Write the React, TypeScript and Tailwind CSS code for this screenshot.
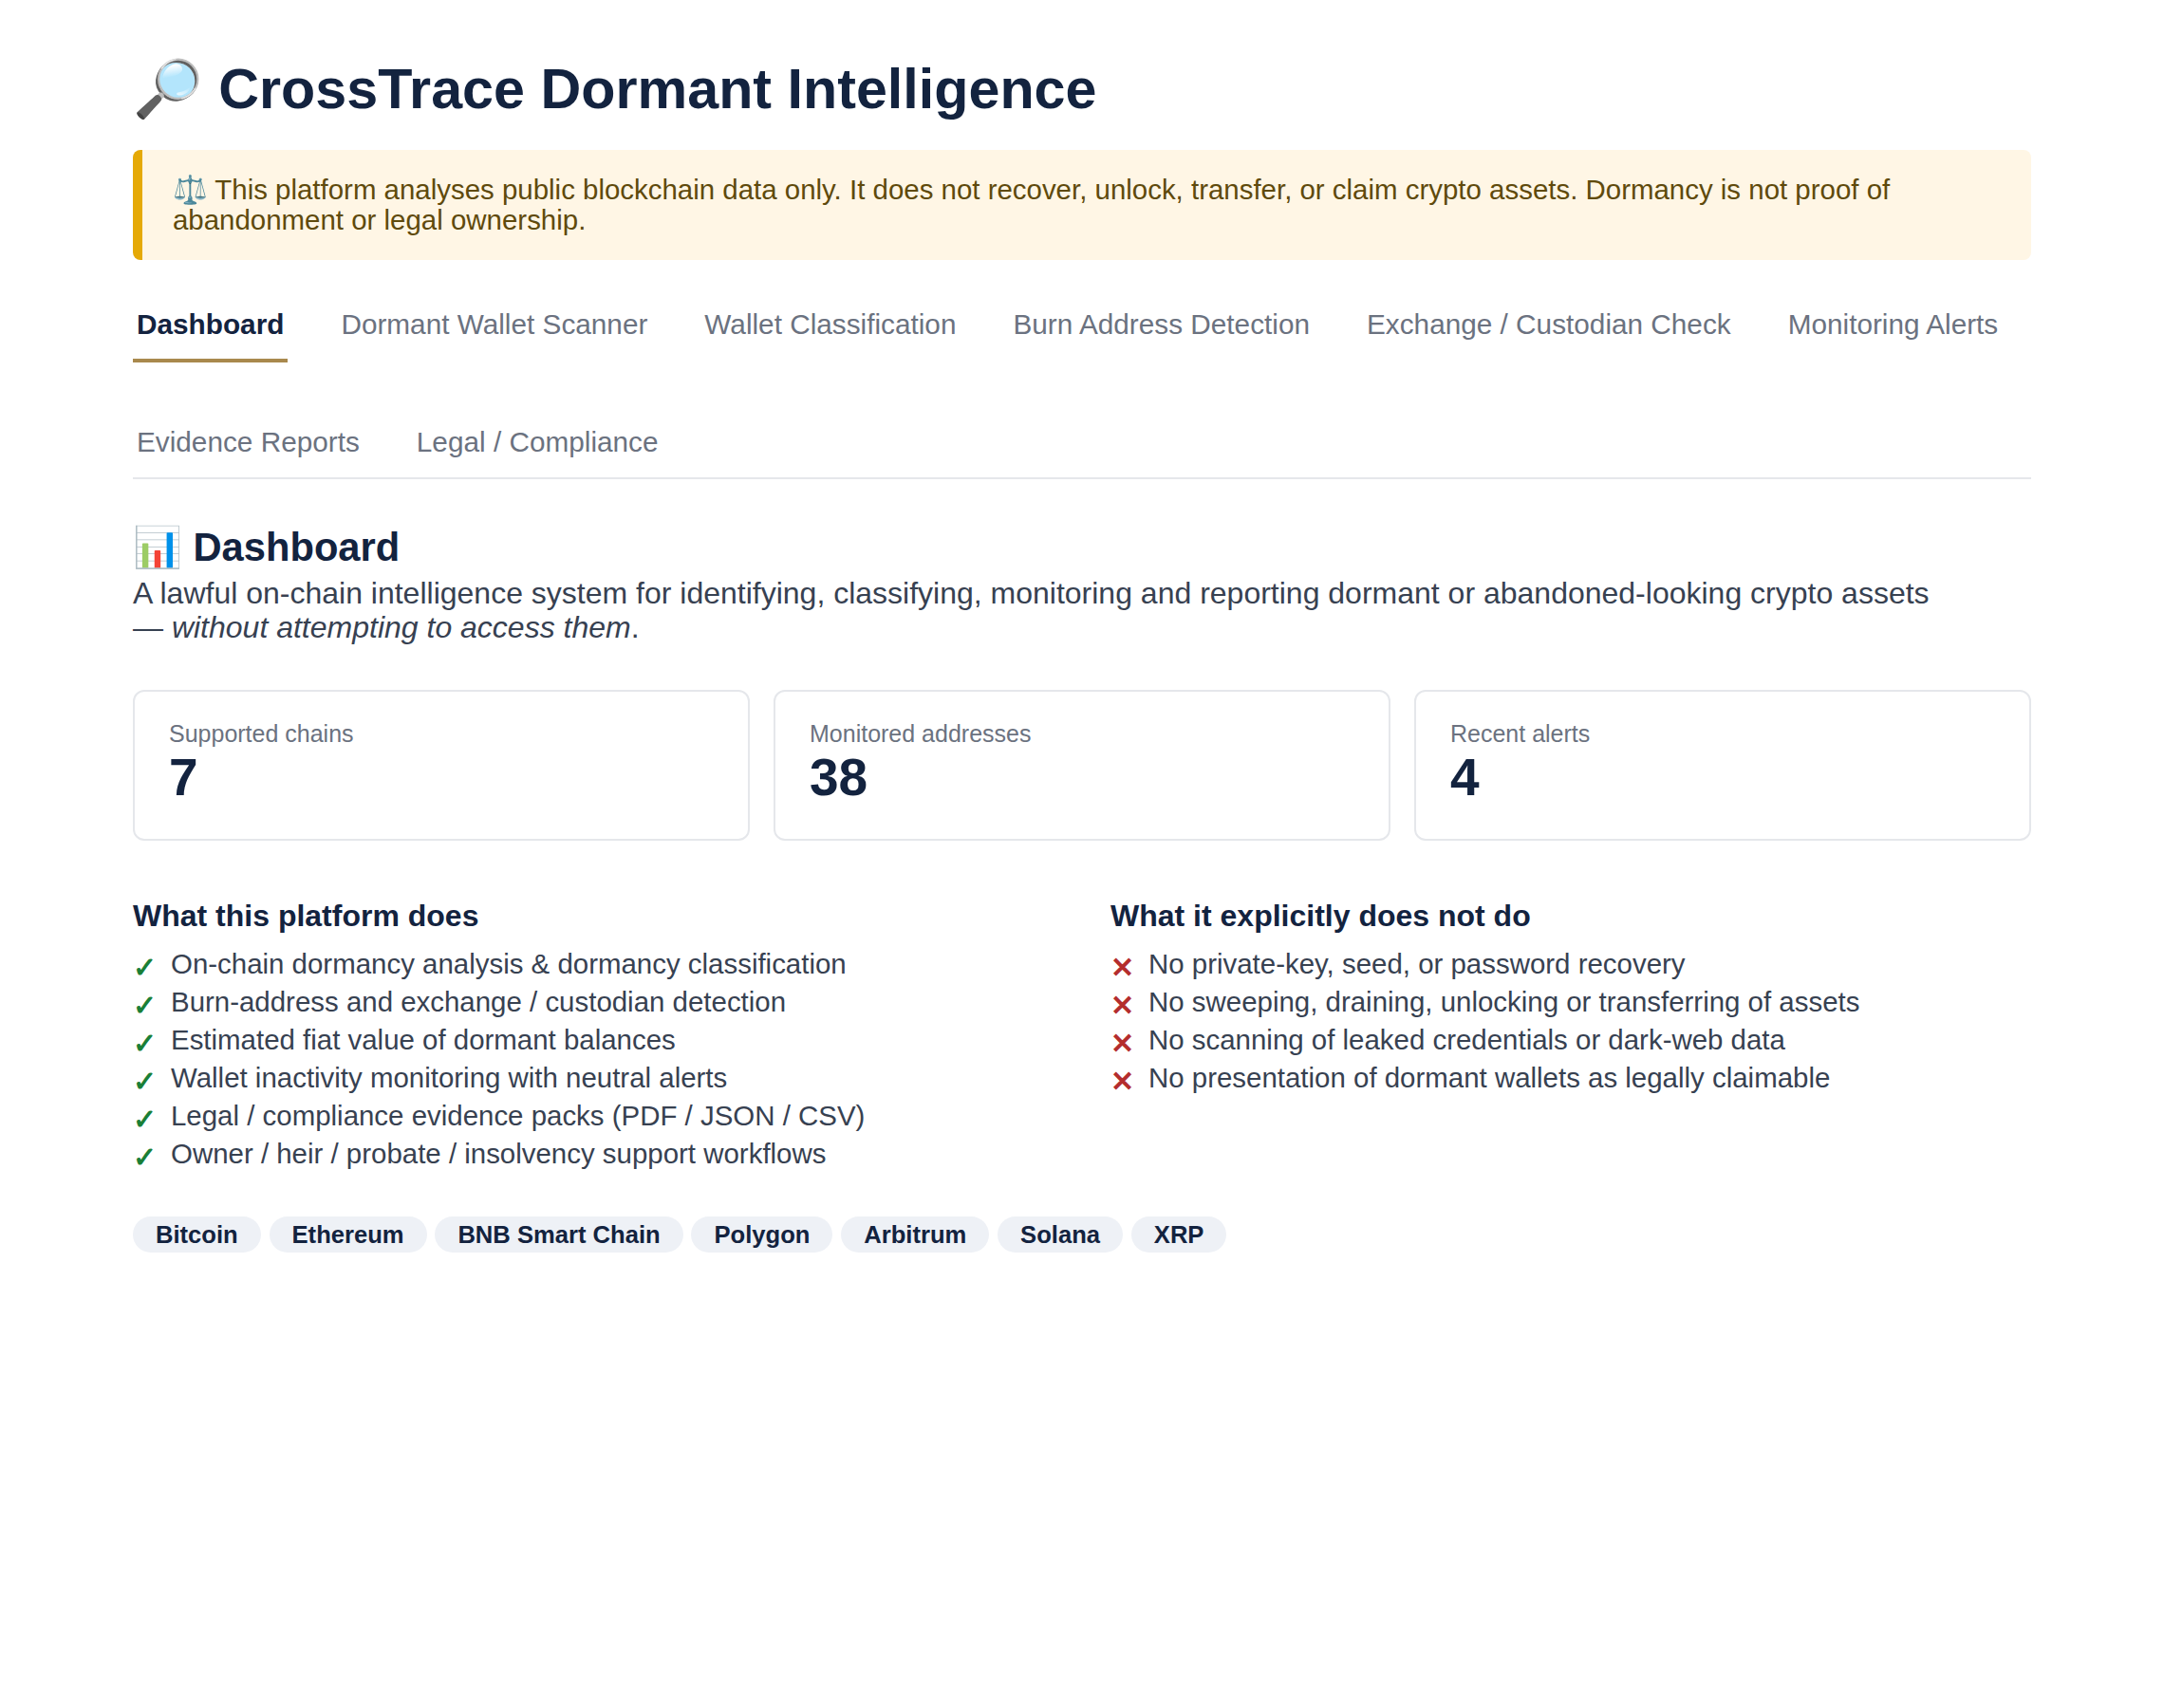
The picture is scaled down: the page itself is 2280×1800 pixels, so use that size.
const F = "font-['Liberation_Sans','Noto_Color_Emoji',sans-serif]";
const tabsTop = ["Dormant Wallet Scanner","Wallet Classification","Burn Address Detection","Exchange / Custodian Check","Monitoring Alerts"];
const tabsBottom = ["Evidence Reports","Legal / Compliance"];
const does = ["On-chain dormancy analysis & dormancy classification","Burn-address and exchange / custodian detection","Estimated fiat value of dormant balances","Wallet inactivity monitoring with neutral alerts","Legal / compliance evidence packs (PDF / JSON / CSV)","Owner / heir / probate / insolvency support workflows"];
const nots = ["No private-key, seed, or password recovery","No sweeping, draining, unlocking or transferring of assets","No scanning of leaked credentials or dark-web data","No presentation of dormant wallets as legally claimable"];
const chains = ["Bitcoin","Ethereum","BNB Smart Chain","Polygon","Arbitrum","Solana","XRP"];
const stats: [string,string][] = [["Supported chains","7"],["Monitored addresses","38"],["Recent alerts","4"]];

function List({title, items, mark, color}:{title:string;items:string[];mark:string;color:string}){
  return (
    <div>
      <h3 className="text-[32px] leading-[40px] font-bold text-[#13233f]">{title}</h3>
      <ul className="mt-[11.5px]">
        {items.map(t=>(
          <li key={t} className="flex h-[40px] items-center text-[29.44px] leading-[40px] text-[#374151]">
            <span className={`w-[40px] shrink-0 font-bold text-[30px] translate-y-[4px] ${color}`}>{mark}</span>
            <span>{t}</span>
          </li>
        ))}
      </ul>
    </div>
  );
}

export default function App(){
  return (
    <div className={`${F} bg-white min-h-[1800px] px-[140px] pt-[50px] text-[#374151]`}>
      <h1 className="text-[59.25px] leading-[88px] font-bold text-[#13233f]">🔎 CrossTrace Dormant Intelligence</h1>
      <div className="mt-[20px] h-[116px] bg-[#fff6e5] border-l-[10px] border-[#e5a906] rounded-lg pl-[32px] pr-6 pt-[26px] text-[29.45px] leading-[32px] text-[#5f4a0c]">⚖️ This platform analyses public blockchain data only. It does not recover, unlock, transfer, or claim crypto assets. Dormancy is not proof of abandonment or legal ownership.</div>
      <div className="mt-[32px] flex flex-wrap gap-x-[52px] gap-y-[47px] border-b-2 border-[#e5e7eb]">
        <div className="h-[76px] px-1 pt-[18px] text-[29.75px] leading-[36px] font-bold text-[#13233f] border-b-4 border-[#a9894d]">Dashboard</div>
        {tabsTop.map(t=><div key={t} className="h-[74px] px-1 pt-[18px] text-[29.75px] leading-[36px] text-[#6b7280]">{t}</div>)}
        {tabsBottom.map(t=><div key={t} className="h-[74px] px-1 pt-[19px] text-[29.75px] leading-[36px] text-[#6b7280]">{t}</div>)}
      </div>
      <h2 className="mt-[46px] text-[41.7px] leading-[52px] font-bold text-[#13233f]">📊 Dashboard</h2>
      <p className="mt-[4px] text-[32px] leading-[36px] text-[#374151]">A lawful on-chain intelligence system for identifying, classifying, monitoring and reporting dormant or abandoned-looking crypto assets<br/>— <em>without attempting to access them</em>.</p>
      <div className="mt-[47.5px] grid grid-cols-3 gap-[25px]">
        {stats.map(([l,v])=>(
          <div key={l} className="h-[159px] border-2 border-[#e5e7eb] rounded-xl px-[36px] pt-[29px]">
            <div className="text-[25px] leading-[30px] text-[#6b7280]">{l}</div>
            <div className="mt-[3.5px] text-[55px] leading-[56px] font-bold text-[#13233f]">{v}</div>
          </div>
        ))}
      </div>
      <div className="mt-[59px] grid grid-cols-2 gap-[60px]">
        <List title="What this platform does" items={does} mark="✓" color="text-[#1a7f37]"/>
        <List title="What it explicitly does not do" items={nots} mark="✕" color="text-[#b42d2d]"/>
      </div>
      <div className="mt-[46px] flex gap-[8.8px]">
        {chains.map(c=><span key={c} className="h-[38px] px-[24px] rounded-full bg-[#eef1f6] text-[25.6px] leading-[38px] font-bold text-[#13233f]">{c}</span>)}
      </div>
    </div>
  );
}
